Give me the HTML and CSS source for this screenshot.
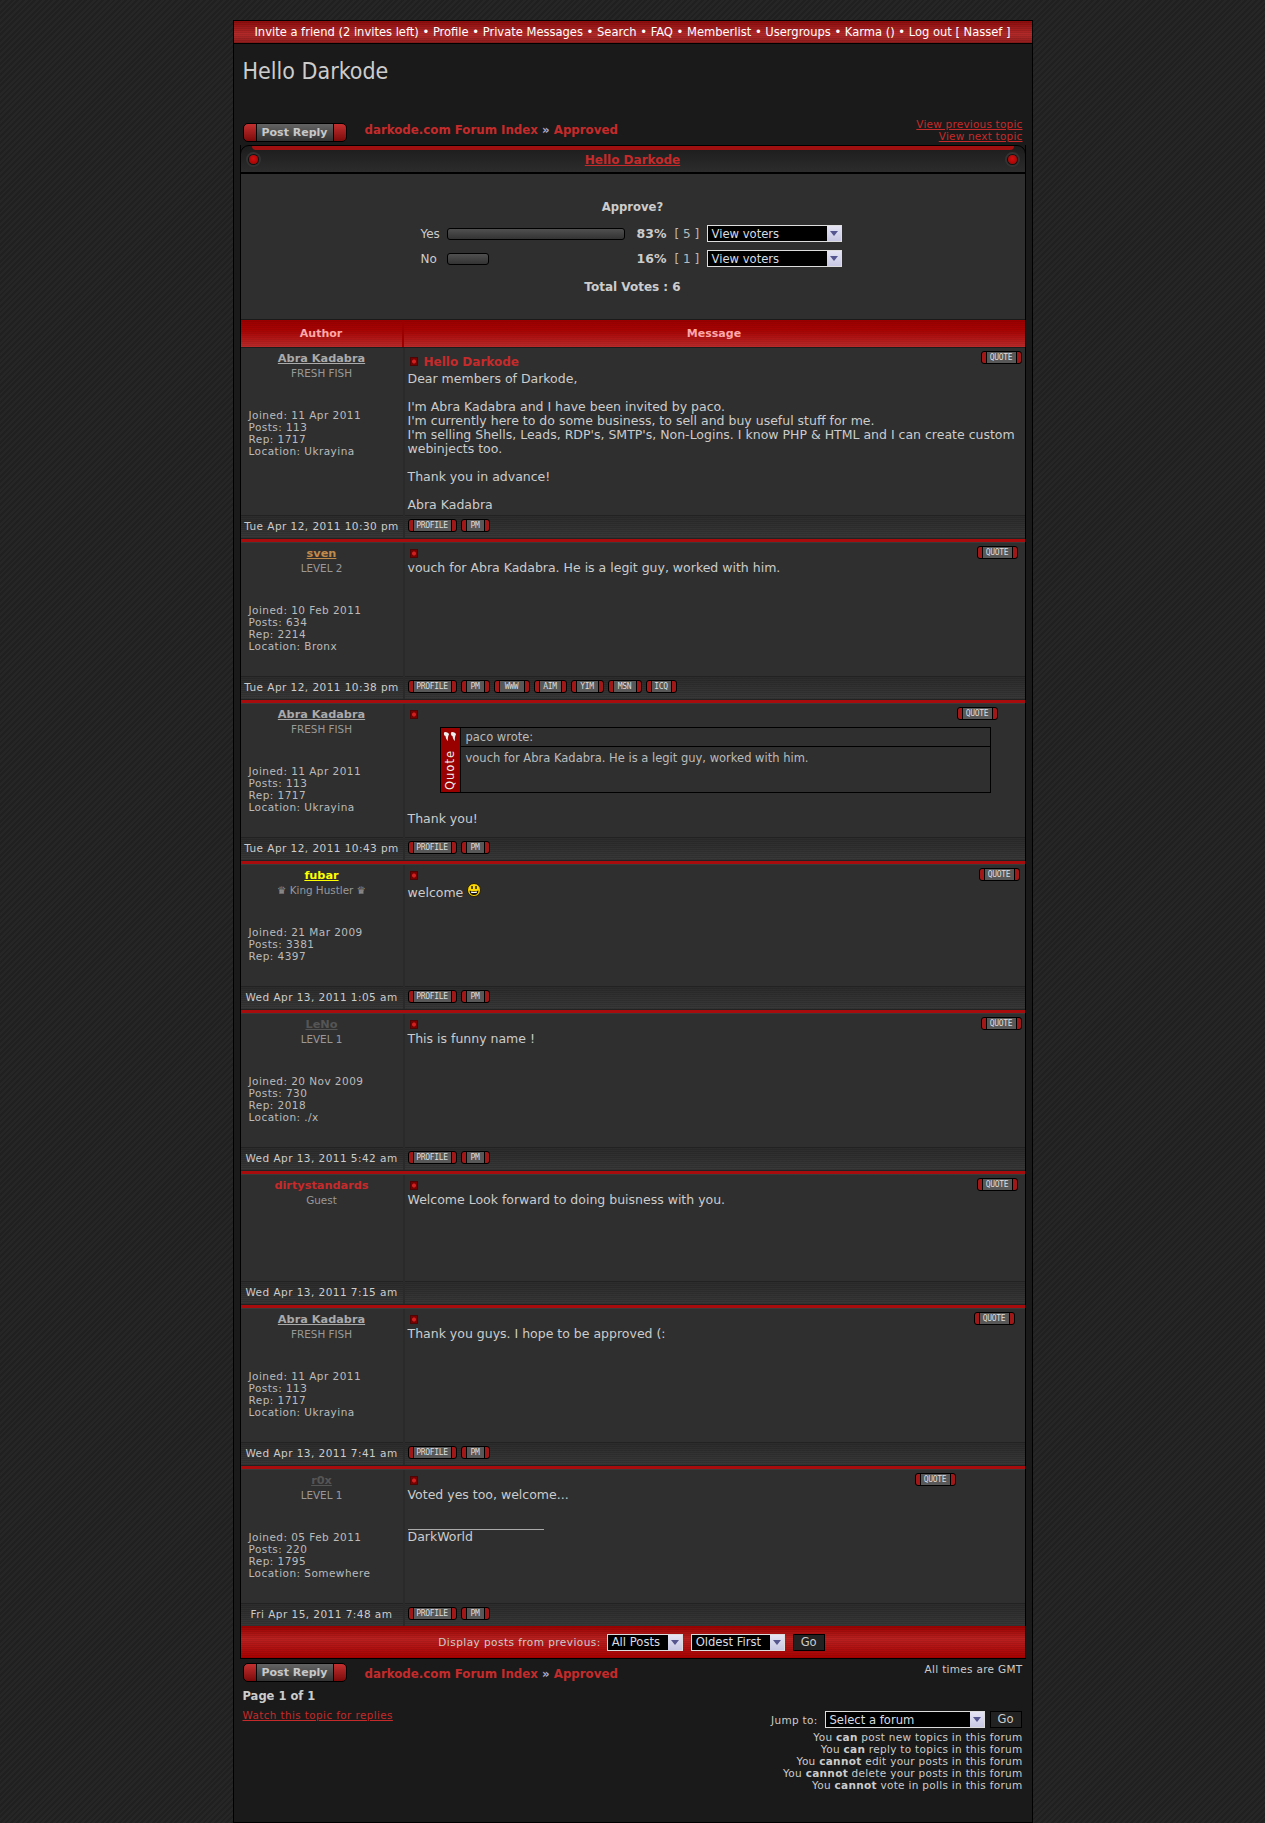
FILE: index.html
```html
<!DOCTYPE html>
<html lang="en">
<head>
    <meta charset="UTF-8">
    <title>Hello Darkode</title>
    <link rel="stylesheet" href="styles.css">
</head>
<body>
    <div class="wrap">
        <div class="topnav">Invite a friend (2 invites left) • Profile • Private Messages • Search • FAQ • Memberlist • Usergroups • Karma () • Log out [ Nassef ]</div>
        <h1 class="site-title">Hello Darkode</h1>

        <div class="navrow">
            <a class="reply-btn"><span>Post Reply</span></a>
            <div class="crumbs"><a>darkode.com Forum Index</a> <b>»</b> <a>Approved</a></div>
            <div class="prevnext"><a>View previous topic</a><a>View next topic</a></div>
        </div>

        <div class="box">
            <div class="box-head">
                <i class="dot"></i>
                <a>Hello Darkode</a>
                <i class="dot"></i>
            </div>

            <div class="poll">
                <div class="poll-q">Approve?</div>
                <div class="poll-row">
                    <span>Yes</span>
                    <span class="bar"></span>
                    <b class="pct">83%</b>
                    <span class="cnt">[ 5 ]</span>
                    <div class="pick pick-voters"><span>View voters</span><i class="arrow"></i></div>
                </div>
                <div class="poll-row">
                    <span>No</span>
                    <span class="bar bar-no"></span>
                    <b class="pct">16%</b>
                    <span class="cnt">[ 1 ]</span>
                    <div class="pick pick-voters"><span>View voters</span><i class="arrow"></i></div>
                </div>
                <div class="poll-total">Total Votes : 6</div>
            </div>

            <div class="thead">
                <div class="th-author">Author</div>
                <div class="th-msg">Message</div>
            </div>

            <!-- post 1 -->
            <div class="post">
                <div class="side">
                    <a class="name n-abra">Abra Kadabra</a>
                    <div class="rank">FRESH FISH</div>
                    <div class="details">Joined: 11 Apr 2011<br>Posts: 113<br>Rep: 1717<br>Location: Ukrayina</div>
                </div>
                <div class="msg msg-first">
                    <div class="subject subject-titled">
                        <i class="mini-icon"></i><span class="subj-text">Hello Darkode</span>
                        <a class="mini m-quote q-980">QUOTE</a>
                    </div>
                    <p>Dear members of Darkode,<br><br>I'm Abra Kadabra and I have been invited by paco.<br>I'm currently here to do some business, to sell and buy useful stuff for me.<br>I'm selling Shells, Leads, RDP's, SMTP's, Non-Logins. I know PHP &amp; HTML and I can create custom webinjects too.<br><br>Thank you in advance!<br><br>Abra Kadabra</p>
                </div>
                <div class="date">Tue Apr 12, 2011 10:30 pm</div>
                <div class="links"><a class="mini m-profile">PROFILE</a><a class="mini m-pm">PM</a></div>
            </div>
            <div class="sep"></div>

            <!-- post 2 -->
            <div class="post">
                <div class="side">
                    <a class="name n-sven">sven</a>
                    <div class="rank">LEVEL 2</div>
                    <div class="details">Joined: 10 Feb 2011<br>Posts: 634<br>Rep: 2214<br>Location: Bronx</div>
                </div>
                <div class="msg">
                    <div class="subject"><i class="mini-icon"></i><a class="mini m-quote q-977">QUOTE</a></div>
                    <p>vouch for Abra Kadabra. He is a legit guy, worked with him.</p>
                </div>
                <div class="date">Tue Apr 12, 2011 10:38 pm</div>
                <div class="links"><a class="mini m-profile">PROFILE</a><a class="mini m-pm">PM</a><a class="mini m-www">WWW</a><a class="mini m-aim">AIM</a><a class="mini m-yim">YIM</a><a class="mini m-msn">MSN</a><a class="mini m-icq">ICQ</a></div>
            </div>
            <div class="sep"></div>

            <!-- post 3 -->
            <div class="post">
                <div class="side">
                    <a class="name n-abra">Abra Kadabra</a>
                    <div class="rank">FRESH FISH</div>
                    <div class="details">Joined: 11 Apr 2011<br>Posts: 113<br>Rep: 1717<br>Location: Ukrayina</div>
                </div>
                <div class="msg">
                    <div class="subject"><i class="mini-icon"></i><a class="mini m-quote q-957">QUOTE</a></div>
                    <div class="quotebox">
                        <div class="quote-tab">
                            <svg width="14" height="11" viewBox="0 0 14 11"><path d="M2 1C.5 1 .5 4.500 2.500 5 2.800 7 3.500 9 5 10 4.500 8 5 5 6 3.500 6 2 4 1 2 1zM9 1C7.500 1 7.500 4.500 9.500 5 9.800 7 10.500 9 12 10 11.500 8 12 5 13 3.500 13 2 11 1 9 1z" fill="#eee"/></svg>
                            <span>Quote</span>
                        </div>
                        <div class="quote-main">
                            <div class="quote-who">paco wrote:</div>
                            <div class="quote-body">vouch for Abra Kadabra. He is a legit guy, worked with him.</div>
                        </div>
                    </div>
                    <p class="after-quote">Thank you!</p>
                </div>
                <div class="date">Tue Apr 12, 2011 10:43 pm</div>
                <div class="links"><a class="mini m-profile">PROFILE</a><a class="mini m-pm">PM</a></div>
            </div>
            <div class="sep"></div>

            <!-- post 4 -->
            <div class="post">
                <div class="side">
                    <a class="name n-fubar">fubar</a>
                    <div class="rank">♛ King Hustler ♛</div>
                    <div class="details">Joined: 21 Mar 2009<br>Posts: 3381<br>Rep: 4397</div>
                </div>
                <div class="msg">
                    <div class="subject"><i class="mini-icon"></i><a class="mini m-quote q-979">QUOTE</a></div>
                    <p>welcome <svg class="smile" width="14" height="14" viewBox="0 0 14 14"><circle cx="7" cy="7" r="6.500" fill="#fdd800" stroke="#241c00"/><path d="M5 3v3M9 3v3" stroke="#111" stroke-width="1.400"/><path d="M2.500 7.500C4.500 8.500 9.500 8.500 11.500 7.500 11.500 10.500 9.500 12 7 12S2.500 10.500 2.500 7.500z" fill="#111"/><path d="M4 8.600C6 9.100 8 9.100 10 8.600V9.800C8 10.200 6 10.200 4 9.800z" fill="#fff"/></svg></p>
                </div>
                <div class="date">Wed Apr 13, 2011 1:05 am</div>
                <div class="links"><a class="mini m-profile">PROFILE</a><a class="mini m-pm">PM</a></div>
            </div>
            <div class="sep"></div>

            <!-- post 5 -->
            <div class="post">
                <div class="side">
                    <a class="name n-grey">LeNo</a>
                    <div class="rank">LEVEL 1</div>
                    <div class="details">Joined: 20 Nov 2009<br>Posts: 730<br>Rep: 2018<br>Location: ./x</div>
                </div>
                <div class="msg">
                    <div class="subject"><i class="mini-icon"></i><a class="mini m-quote q-980">QUOTE</a></div>
                    <p>This is funny name !</p>
                </div>
                <div class="date">Wed Apr 13, 2011 5:42 am</div>
                <div class="links"><a class="mini m-profile">PROFILE</a><a class="mini m-pm">PM</a></div>
            </div>
            <div class="sep"></div>

            <!-- post 6, guest -->
            <div class="post">
                <div class="side side-guest">
                    <span class="name n-guest">dirtystandards</span>
                    <div class="rank">Guest</div>
                </div>
                <div class="msg">
                    <div class="subject"><i class="mini-icon"></i><a class="mini m-quote q-977">QUOTE</a></div>
                    <p>Welcome Look forward to doing buisness with you.</p>
                </div>
                <div class="date">Wed Apr 13, 2011 7:15 am</div>
                <div class="links"></div>
            </div>
            <div class="sep"></div>

            <!-- post 7 -->
            <div class="post">
                <div class="side">
                    <a class="name n-abra">Abra Kadabra</a>
                    <div class="rank">FRESH FISH</div>
                    <div class="details">Joined: 11 Apr 2011<br>Posts: 113<br>Rep: 1717<br>Location: Ukrayina</div>
                </div>
                <div class="msg">
                    <div class="subject"><i class="mini-icon"></i><a class="mini m-quote q-974">QUOTE</a></div>
                    <p>Thank you guys. I hope to be approved (:</p>
                </div>
                <div class="date">Wed Apr 13, 2011 7:41 am</div>
                <div class="links"><a class="mini m-profile">PROFILE</a><a class="mini m-pm">PM</a></div>
            </div>
            <div class="sep"></div>

            <!-- post 8 -->
            <div class="post">
                <div class="side">
                    <a class="name n-grey">r0x</a>
                    <div class="rank">LEVEL 1</div>
                    <div class="details">Joined: 05 Feb 2011<br>Posts: 220<br>Rep: 1795<br>Location: Somewhere</div>
                </div>
                <div class="msg">
                    <div class="subject"><i class="mini-icon"></i><a class="mini m-quote q-915">QUOTE</a></div>
                    <p>Voted yes too, welcome...</p>
                    <div class="sig-line"></div>
                    <p>DarkWorld</p>
                </div>
                <div class="date">Fri Apr 15, 2011 7:48 am</div>
                <div class="links"><a class="mini m-profile">PROFILE</a><a class="mini m-pm">PM</a></div>
            </div>

            <div class="box-foot">
                <span>Display posts from previous:</span>
                <div class="pick pick-days"><span>All Posts</span><i class="arrow"></i></div>
                <div class="pick pick-order"><span>Oldest First</span><i class="arrow"></i></div>
                <a class="go">Go</a>
            </div>
        </div>

        <div class="bottom">
            <div class="bottom-left">
                <div class="navrow navrow-bottom">
                    <a class="reply-btn"><span>Post Reply</span></a>
                    <div class="crumbs"><a>darkode.com Forum Index</a> <b>»</b> <a>Approved</a></div>
                </div>
                <div class="pageof">Page 1 of 1</div>
                <a class="watch">Watch this topic for replies</a>
            </div>
            <div class="bottom-right">
                <div class="times">All times are GMT</div>
                <div class="jump">
                    <span>Jump to:</span>
                    <div class="pick pick-forum"><span>Select a forum</span><i class="arrow"></i></div>
                    <a class="go">Go</a>
                </div>
                <div class="perms">
                    You <b>can</b> post new topics in this forum<br>
                    You <b>can</b> reply to topics in this forum<br>
                    You <b>cannot</b> edit your posts in this forum<br>
                    You <b>cannot</b> delete your posts in this forum<br>
                    You <b>cannot</b> vote in polls in this forum
                </div>
            </div>
        </div>
    </div>
</body>
</html>
```

FILE: styles.css
```css
body {
    margin: 0;
    padding: 20px 0 0;
    font-family: "DejaVu Sans", Verdana, sans-serif;
    font-size: 12px;
    color: #ccc;
    background: repeating-linear-gradient(135deg, #202020 0, #202020 2px, #262626 2px, #262626 4px);
}
a {
    color: #c62a2a;
}
.wrap {
    width: 798px;
    margin: 0 auto;
    padding-bottom: 31px;
    background: #1a1a1a;
    border: 1px solid #000;
}
.topnav {
    height: 22px;
    line-height: 21px;
    text-align: center;
    color: #fff;
    font-family: "DejaVu Sans Condensed", "DejaVu Sans", sans-serif;
    font-stretch: condensed;
    font-size: 12.800px;
    background:
        repeating-linear-gradient(#0000 0, #0000 1px, rgba(0, 0, 0, 0.1) 1px, rgba(0, 0, 0, 0.1) 2px),
        linear-gradient(#8c0c0c, #b52a2a 60%, #8e1c1c);
    border-bottom: 1px solid #000;
}
.site-title {
    margin: 0;
    padding: 14px 9px 0;
    height: 63px;
    font-family: "DejaVu Sans Condensed", "DejaVu Sans", sans-serif;
    font-size: 23px;
    font-weight: normal;
    line-height: 26px;
    color: #ccc;
}
.navrow {
    display: flex;
    align-items: center;
    height: 24px;
    padding: 0 9px;
}
.reply-btn {
    flex: none;
    width: 78px;
    height: 17px;
    margin-bottom: 2px;
    padding: 0 12px;
    border: 1px solid #000;
    border-radius: 5px;
    background: linear-gradient(#c43030, #7c0a0a);
}
.reply-btn span {
    display: block;
    height: 17px;
    line-height: 17px;
    text-align: center;
    font-size: 11px;
    font-weight: bold;
    color: #c8c8c8;
    background: linear-gradient(#636363, #333);
    border: solid #000;
    border-width: 0 1px;
}
.crumbs {
    margin: 0 0 6px 18px;
    font-size: 11.800px;
    font-weight: bold;
    white-space: nowrap;
}
.crumbs b {
    color: #aac;
}
.prevnext {
    margin: 0 0 6px auto;
    display: flex;
    flex-direction: column;
    align-items: flex-end;
    font-size: 10.500px;
    letter-spacing: 0.2px;
    line-height: 12px;
}
.prevnext a {
    text-decoration: underline;
}
.box {
    margin: 0 6px;
    border: 1px solid #000;
    border-top: 0;
}
.box-head {
    position: relative;
    display: flex;
    justify-content: space-between;
    align-items: center;
    height: 28px;
    padding: 1px 8px 0;
    margin: 0 -1px;
    border: 1px solid #000;
    border-radius: 9px 9px 0 0;
    box-sizing: border-box;
    background: linear-gradient(#1c1c1c, #2c2c2c);
    font-size: 12px;
    font-weight: bold;
}
.box-head::before {
    content: "";
    position: absolute;
    top: 0;
    left: 11px;
    right: 11px;
    height: 4px;
    background: #a01010;
    border-radius: 0 0 4px 4px;
}
.box-head a {
    text-decoration: underline;
}
.dot {
    width: 9px;
    height: 9px;
    border-radius: 50%;
    background: radial-gradient(circle at 50% 40%, #d01010, #900);
    box-shadow: 0 0 0 1px #111, 0 0 0 3px #333;
}
.poll {
    height: 146px;
    padding-top: 1px;
    box-sizing: border-box;
    border-top: 1px solid #000;
    background: #2f2f2f;
    font-size: 12px;
}
.poll-q,
.poll-total {
    text-align: center;
    font-weight: bold;
    line-height: 14px;
}
.poll-q {
    padding-top: 25px;
    margin-bottom: 11px;
    font-size: 11.600px;
}
.poll-total {
    margin-top: 13px;
    font-size: 12px;
}
.poll-row {
    display: grid;
    grid-template-columns: 26px 187px 33px 40px 135px;
    align-items: center;
    height: 17px;
    margin: 0 0 8px 180px;
}
.poll-row .pct {
    text-align: right;
    font-size: 12.500px;
}
.poll-row .cnt {
    padding-left: 8px;
    color: #bbb;
}
.bar {
    width: 178px;
    height: 12px;
    border: 1px solid #000;
    box-sizing: border-box;
    border-radius: 3px;
    background: linear-gradient(#505050, #333);
}
.bar-no {
    width: 42px;
}
.pick {
    display: flex;
    align-items: center;
    justify-content: space-between;
    flex: none;
    height: 17px;
    padding-left: 4px;
    box-sizing: border-box;
    border: 1px solid #ddd;
    background: #000;
    color: #d8dce0;
    font-size: 11.600px;
}
.arrow {
    position: relative;
    width: 14px;
    height: 15px;
    background: linear-gradient(#e4e4f4, #c8c8e4);
}
.arrow::after {
    content: "";
    position: absolute;
    left: 3px;
    top: 5px;
    border: 4px solid transparent;
    border-top: 5px solid #55558f;
    border-bottom: 0;
}
.pick-voters {
    width: 135px;
}
.pick-days {
    width: 76px;
    margin-right: 8px;
}
.pick-order {
    width: 94px;
}
.pick-forum {
    width: 160px;
}
.thead {
    display: grid;
    grid-template-columns: 163px 1fr;
    height: 29px;
    line-height: 27px;
    text-align: center;
    font-size: 11px;
    font-weight: bold;
    color: #ffa8a8;
    background:
        repeating-linear-gradient(#0000 0, #0000 1px, rgba(0, 0, 0, 0.06) 1px, rgba(0, 0, 0, 0.06) 2px),
        linear-gradient(#9a0000, #a80404 40%, #b92a2a);
    border-bottom: 1px solid #1c1c1c;
    border-top: 1px solid #1a1a1a;
    box-sizing: border-box;
}
.th-author {
    border-right: 2px solid #9a0000;
}
.post {
    display: grid;
    grid-template-columns: 162px 1fr;
    column-gap: 2px;
    background: #2a2a2a;
}
.side,
.msg {
    background: #2f2f2f;
}
.side {
    box-sizing: border-box;
    padding: 4px 0 24px;
    text-align: center;
}
.side-guest {
    min-height: 106px;
}
.name {
    display: block;
    font-size: 11.300px;
    font-weight: bold;
    line-height: 14px;
    text-decoration: underline;
}
.n-abra {
    color: #aaa;
}
.n-sven {
    color: #c08a4a;
}
.n-fubar {
    color: #ffff00;
}
.n-grey {
    color: #555;
}
.n-guest {
    color: #c62a2a;
    text-decoration: none;
}
.rank {
    margin-top: 1px;
    font-size: 10.400px;
    line-height: 12px;
    color: #999;
}
.details {
    margin-top: 30px;
    padding-left: 8px;
    text-align: left;
    font-size: 10.500px;
    letter-spacing: 0.450px;
    line-height: 12px;
    color: #bbb;
}
.msg {
    padding: 0 3px;
}
.msg-first {
    min-height: 167px;
}
.msg p {
    margin: 0;
    line-height: 14px;
    font-size: 12.500px;
    color: #ccc;
}
.subject {
    position: relative;
    display: flex;
    align-items: flex-start;
    height: 18px;
    padding: 6px 0 0 2px;
    box-sizing: border-box;
}
.subject-titled {
    height: 24px;
    padding-top: 9px;
}
.mini-icon {
    width: 8px;
    height: 9px;
    box-sizing: border-box;
    border: 1px solid #4c0606;
    background: radial-gradient(circle, #d02020 0 1.500px, #700 2.500px);
}
.subj-text {
    margin: -2px 0 0 6px;
    font-size: 12px;
    font-weight: bold;
    line-height: 14px;
    color: #c62a2a;
}
.mini {
    display: block;
    height: 13px;
    line-height: 11px;
    font-family: "DejaVu Sans Mono", monospace;
    font-size: 8px;
    letter-spacing: -0.300px;
    text-align: center;
    color: #ddd;
    background: linear-gradient(to right, #a01818 0 4px, #000 4px 5px, #585858 5px calc(100% - 5px), #000 calc(100% - 5px) calc(100% - 4px), #a01818 calc(100% - 4px));
    border: 1px solid #000;
    box-sizing: border-box;
    border-radius: 3px;
}
.m-profile { width: 49px; }
.m-pm { width: 29px; }
.m-www { width: 36px; }
.m-aim { width: 33px; }
.m-yim { width: 33px; }
.m-msn { width: 34px; }
.m-icq { width: 31px; }
.m-quote {
    position: absolute;
    top: 3px;
    width: 41px;
}
.q-980 { left: 573px; }
.q-977 { left: 569px; }
.q-957 { left: 549px; }
.q-979 { left: 571px; }
.q-974 { left: 566px; }
.q-915 { left: 507px; }
.date {
    height: 23px;
    line-height: 21px;
    text-align: center;
    font-size: 10.500px;
    letter-spacing: 0.450px;
    color: #ccc;
    border-top: 1px solid #222;
    box-sizing: border-box;
    background:
        repeating-linear-gradient(#0000 0, #0000 1px, rgba(0, 0, 0, 0.12) 1px, rgba(0, 0, 0, 0.12) 2px),
        linear-gradient(#2c2c2c, #383838);
}
.links {
    display: flex;
    align-items: flex-start;
    gap: 4px;
    height: 23px;
    padding: 3px 0 0 3px;
    border-top: 1px solid #222;
    box-sizing: border-box;
    background:
        repeating-linear-gradient(#0000 0, #0000 1px, rgba(0, 0, 0, 0.12) 1px, rgba(0, 0, 0, 0.12) 2px),
        linear-gradient(#2c2c2c, #383838);
}
.sep {
    height: 5px;
    box-sizing: border-box;
    background: #a80c0c;
    border-top: 1px solid #222;
    border-bottom: 1px solid #3a3a3a;
}
.quotebox {
    display: flex;
    width: 551px;
    height: 66px;
    margin: 5px 0 0 32px;
    border: 1px solid #000;
    box-sizing: border-box;
}
.quote-tab {
    display: flex;
    flex-direction: column;
    align-items: center;
    flex: none;
    width: 20px;
    padding-top: 3px;
    box-sizing: border-box;
    background: #900;
    border-right: 1px solid #000;
    color: #eee;
    font-size: 11.500px;
}
.quote-tab span {
    margin-top: 8px;
    writing-mode: vertical-rl;
    transform: rotate(180deg);
    line-height: 18px;
    letter-spacing: 1px;
}
.quote-main {
    flex: 1;
    font-size: 11.500px;
    color: #bbb;
}
.quote-who {
    height: 19px;
    line-height: 18px;
    padding-left: 5px;
    border-bottom: 1px solid #000;
    box-sizing: border-box;
}
.quote-body {
    padding: 4px 0 0 5px;
    line-height: 14px;
}
.msg .after-quote {
    margin-top: 19px;
}
.smile {
    vertical-align: baseline;
}
.sig-line {
    width: 136px;
    height: 1px;
    margin: 27px 0 0;
    background: #aaa;
}
.box-foot {
    display: flex;
    justify-content: center;
    align-items: center;
    height: 32px;
    padding-right: 2px;
    font-size: 10.500px;
    letter-spacing: 0.450px;
    color: #ccc;
    background:
        repeating-linear-gradient(#0000 0, #0000 1px, rgba(0, 0, 0, 0.08) 1px, rgba(0, 0, 0, 0.08) 2px),
        linear-gradient(#9a0000, #b92020 40%, #a80000);
}
.box-foot > span {
    margin-right: 6px;
}
.box-foot .pick {
    letter-spacing: 0;
}
.go {
    width: 32px;
    height: 17px;
    margin-left: 8px;
    line-height: 15px;
    text-align: center;
    font-size: 11.500px;
    letter-spacing: 0;
    color: #ccc;
    background: #222;
    border: 1px solid #000;
    box-sizing: border-box;
}
.bottom {
    display: flex;
    justify-content: space-between;
    padding: 4px 9px 0;
}
.navrow-bottom {
    height: 21px;
    padding: 0;
}
.navrow-bottom .crumbs {
    margin-bottom: 0;
}
.pageof {
    margin-top: 4px;
    font-size: 11.500px;
    font-weight: bold;
    line-height: 16px;
}
.watch {
    display: block;
    margin-top: 4px;
    font-size: 10.300px;
    letter-spacing: 0.450px;
    line-height: 14px;
    text-decoration: underline;
}
.bottom-right {
    display: flex;
    flex-direction: column;
    align-items: flex-end;
    font-size: 10.500px;
    letter-spacing: 0.300px;
    line-height: 12px;
}
.times {
    margin-bottom: 36px;
}
.jump {
    display: flex;
    align-items: center;
    margin-right: 1px;
}
.jump > span {
    margin-right: 7px;
}
.jump .pick {
    letter-spacing: 0;
}
.jump .go {
    margin-left: 5px;
}
.perms {
    margin-top: 3px;
    text-align: right;
}
```
